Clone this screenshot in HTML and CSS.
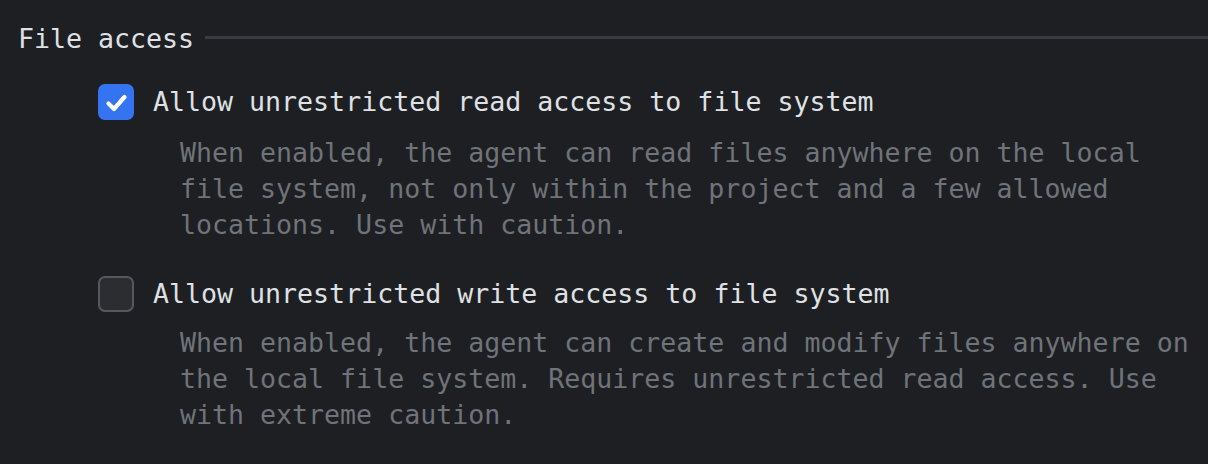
FILE: index.html
```html
<!DOCTYPE html>
<html lang="en">
<head>
    <meta charset="UTF-8">
    <title>File access</title>
    <link rel="stylesheet" href="styles.css">
</head>
<body>
<div class="group">
    <div class="group-title">
        <span>File access</span>
        <div class="group-line"></div>
    </div>

    <div class="option">
        <label class="option-row">
            <span class="box checked">
                <svg width="36" height="36" viewBox="0 0 36 36">
                    <path d="M10.5 19.5 L16 25 L26.5 13" fill="none" stroke="#fff" stroke-width="4.2" stroke-linecap="round" stroke-linejoin="round"/>
                </svg>
            </span>
            <span class="option-label">Allow unrestricted read access to file system</span>
        </label>
        <p class="option-desc">When enabled, the agent can read files anywhere on the local<br>file system, not only within the project and a few allowed<br>locations. Use with caution.</p>
    </div>

    <div class="option">
        <label class="option-row">
            <span class="box"></span>
            <span class="option-label">Allow unrestricted write access to file system</span>
        </label>
        <p class="option-desc second">When enabled, the agent can create and modify files anywhere on<br>the local file system. Requires unrestricted read access. Use<br>with extreme caution.</p>
    </div>
</div>
</body>
</html>
```

FILE: styles.css
```css
* {
    box-sizing: border-box;
}

body {
    margin: 0;
    padding: 21px 0 0 18px;
    background: #1e1f22;
    color: #dfe1e5;
    font-family: "DejaVu Sans Mono", "Liberation Mono", monospace;
    font-size: 26.6px;
    line-height: 36px;
}

.group-title {
    display: flex;
    align-items: center;
    gap: 11px;
}

.group-line {
    flex: 1;
    height: 3px;
    background: #393b40;
    margin-top: -4px;
}

.option {
    padding-left: 80px;
    margin-top: 27px;
}

.option + .option {
    margin-top: 33px;
}

.option-row {
    display: flex;
    align-items: center;
    gap: 19px;
}

.box {
    width: 36px;
    height: 36px;
    border-radius: 7px;
    background: #2b2d30;
    border: 2px solid #55585e;
    display: flex;
}

.box.checked {
    background: #3574f0;
    border: 0;
}

.option-desc {
    margin: 15px 0 0 82px;
    color: #6f737a;
}

.option-desc.second {
    margin-top: 13px;
}
```
